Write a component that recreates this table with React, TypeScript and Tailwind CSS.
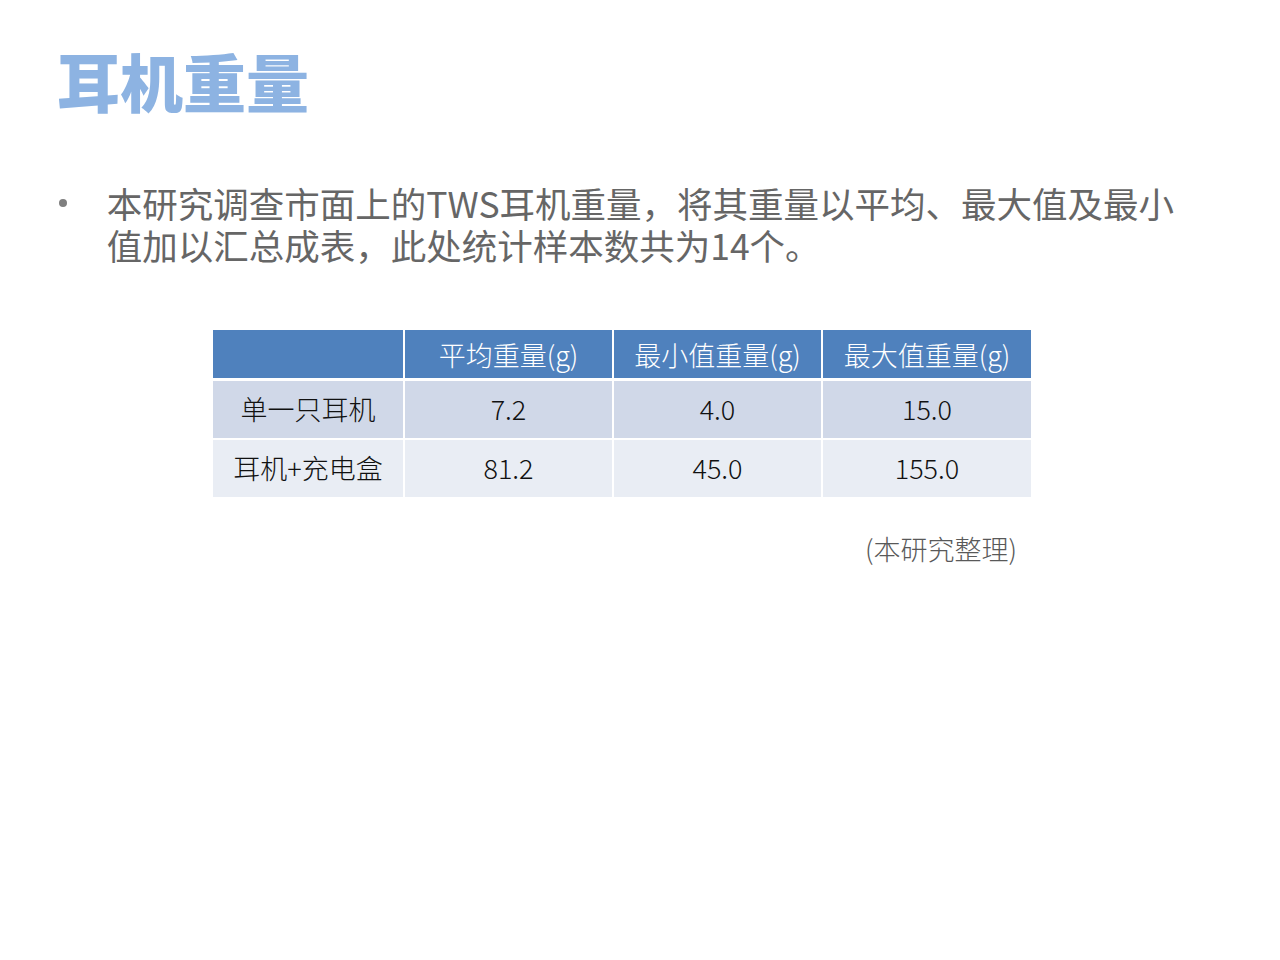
import React from "react";

const font = { fontFamily: '"Noto Sans CJK SC", "Noto Sans", sans-serif' };

export default function App() {
  const rows = [
    { label: "单一只耳机", v: ["7.2", "4.0", "15.0"], bg: "bg-[#d0d8e8]" },
    { label: "耳机+充电盒", v: ["81.2", "45.0", "155.0"], bg: "bg-[#e9edf4]" },
  ];
  return (
    <div className="w-[1280px] h-[960px] bg-white relative overflow-hidden" style={font}>
      <div className="pt-[42px] pl-[57px]">
        <h1 className="text-[63px] leading-[76px] font-black text-[#8db3e2]">耳机重量</h1>
      </div>
      <div className="mt-[64px] pl-[59px] pr-[90px] flex">
        <div className="w-[48px] h-[42px] flex items-center">
          <span className="block w-[8px] h-[8px] rounded-full bg-[#7f7f7f]" />
        </div>
        <p className="text-[35.5px] leading-[42px] text-[#666666] font-normal w-[1090px]">
          本研究调查市面上的TWS耳机重量，将其重量以平均、最大值及最小值加以汇总成表，此处统计样本数共为14个。
        </p>
      </div>
      <div className="mt-[64px] ml-[213px] w-[818px]">
        <div className="grid grid-cols-[190px_207px_207px_208px] gap-x-[2px] bg-white">
          <div className="h-[48px] bg-[#4f81bd]" />
          {["平均重量(g)", "最小值重量(g)", "最大值重量(g)"].map((h) => (
            <div key={h} className="h-[48px] pt-[2px] bg-[#4f81bd] flex items-center justify-center text-white text-[27px] font-light">
              {h}
            </div>
          ))}
        </div>
        <div className="h-[3px]" />
        {rows.map((r, i) => (
          <div key={r.label} className={`grid grid-cols-[190px_207px_207px_208px] gap-x-[2px] ${i === 1 ? "mt-[2px]" : ""}`}>
            <div className={`h-[57px] ${r.bg} flex items-center justify-center text-[27px] text-[#111] font-light`}>{r.label}</div>
            {r.v.map((v, j) => (
              <div key={j} className={`h-[57px] ${r.bg} flex items-center justify-center text-[27px] text-[#111] font-light`}>
                {v}
              </div>
            ))}
          </div>
        ))}
      </div>
      <div className="mt-[36px] ml-[865px] text-[27px] leading-[32px] text-[#595959] font-light">(本研究整理)</div>
    </div>
  );
}
